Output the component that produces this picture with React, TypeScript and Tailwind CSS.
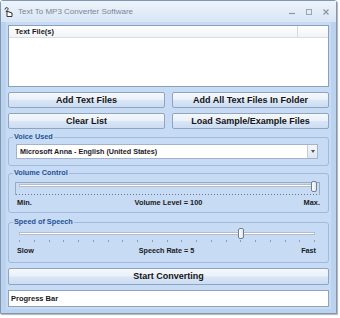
import React from "react";

function WinButton({ children, className = "" }: { children: React.ReactNode; className?: string }) {
  return (
    <button
      className={`flex items-center justify-center rounded-[2px] border border-[#8ea5c2] bg-[linear-gradient(to_bottom,#f5f8fc_0%,#eaf1fa_46%,#d8e5f5_54%,#ccddf2_100%)] text-[9px] font-bold leading-none text-[#141414] ${className}`}
    >
      {children}
    </button>
  );
}

function Group({ title, className = "", children }: { title: string; className?: string; children: React.ReactNode }) {
  return (
    <div className={`relative rounded-[3px] border border-[#9fbadc] ${className}`}>
      <span className="absolute -top-[6px] left-[4px] bg-[#c7dbf4] px-[1px] text-[7.3px] font-bold leading-[10px] text-[#1f5196]">
        {title}
      </span>
      {children}
    </div>
  );
}

function Thumb({ className = "" }: { className?: string }) {
  return (
    <div
      className={`absolute h-[11px] w-[6px] rounded-[2px] border border-[#6f8096] bg-[linear-gradient(to_right,#ffffff,#dfe6ee)] ${className}`}
    />
  );
}

export default function App() {
  const ticks = Array.from({ length: 21 }, (_, i) => i);

  return (
    <div className="h-[318px] w-[340px] overflow-hidden bg-white font-['Liberation_Sans',Arial,sans-serif]">
      <div className="flex h-[314px] w-[337px] flex-col rounded-t-[3px] border border-[#8196b1] bg-[#bcd3ef] shadow-[1px_1px_1px_rgba(0,0,0,0.3)]">
        {/* title bar */}
        <div className="flex h-[21px] items-center bg-[linear-gradient(to_bottom,#edf3fa,#d9e6f5)] pl-[2px] pr-[7px]">
          <svg width="11" height="12" viewBox="0 0 11 12" className="shrink-0">
            <path d="M2 3.5 C2 1.5 4.5 1 5 2.5 C5.5 4 3 4.5 3.2 6" fill="none" stroke="#222" strokeWidth="1" />
            <path d="M4 5.5 V10.5 H9 V7 H8 V6.5 H7 V6 H5.5 V5.5 Z" fill="#fff" stroke="#222" strokeWidth="0.9" />
          </svg>
          <span className="ml-[4px] text-[8px] leading-none text-[#7a8796]">Text To MP3 Converter Software</span>
          <div className="ml-auto flex items-center gap-[11px]">
            <svg width="6" height="6" viewBox="0 0 6 6">
              <path d="M0 4.5 H6" stroke="#8a96a6" strokeWidth="1.2" />
            </svg>
            <svg width="6" height="6" viewBox="0 0 6 6">
              <rect x="0.5" y="0.5" width="5" height="5" fill="none" stroke="#9aa5b4" strokeWidth="1" />
            </svg>
            <svg width="6" height="6" viewBox="0 0 6 6">
              <path d="M0.5 0.5 L5.5 5.5 M5.5 0.5 L0.5 5.5" stroke="#8a96a6" strokeWidth="1.2" />
            </svg>
          </div>
        </div>

        {/* client area */}
        <div className="mx-[5px] flex flex-1 flex-col bg-[#c7dbf4] px-[2px] pt-[3px]">
          {/* file list */}
          <div className="flex h-[62px] flex-col border border-[#8ba0bb] bg-white">
            <div className="flex h-[12px] border-b border-[#d9dee5] bg-[linear-gradient(to_bottom,#ffffff,#f1f3f6)]">
              <div className="flex w-[289px] items-center border-r border-[#d5dae1] pl-[6px] text-[7.5px] font-bold leading-none text-[#1a1a1a]">
                Text File(s)
              </div>
            </div>
          </div>

          <div className="mt-[5px] grid grid-cols-2 gap-x-[7px]">
            <WinButton className="h-[16px]">Add Text Files</WinButton>
            <WinButton className="h-[16px]">Add All Text Files In Folder</WinButton>
          </div>
          <div className="mt-[5px] grid grid-cols-2 gap-x-[7px]">
            <WinButton className="h-[16px]">Clear List</WinButton>
            <WinButton className="h-[16px]">Load Sample/Example Files</WinButton>
          </div>

          {/* voice */}
          <Group title="Voice Used" className="mt-[8px] pb-[6px] pl-[7px] pr-[10px] pt-[6px]">
            <div className="flex h-[15px] items-stretch border border-[#a4b3c6] bg-white">
              <span className="flex flex-1 items-center pl-[3px] text-[7.2px] font-bold leading-none text-[#1a1a1a]">
                Microsoft Anna - English (United States)
              </span>
              <span className="flex w-[10px] items-center justify-center border-l border-[#c3cedb] bg-[linear-gradient(to_bottom,#f6f8fb,#dde5ef)]">
                <svg width="4" height="3" viewBox="0 0 4 3">
                  <path d="M0 0 H4 L2 3 Z" fill="#4a5562" />
                </svg>
              </span>
            </div>
          </Group>

          {/* volume */}
          <Group title="Volume Control" className="mt-[7px] pb-[4px] pt-[8px]">
            <div className="relative ml-[6px] mr-[8px] h-[13px] border-x border-t border-[#9aa9bb]">
              <div className="mx-[3px] mt-[1px] h-[3px] border border-[#b3bcc8] bg-white" />
              <Thumb className="-top-[2px] right-[2px] h-[10px] w-[5px]" />
              <div className="absolute bottom-0 left-0 right-0 h-[1px] bg-[repeating-linear-gradient(90deg,#66778c_0_1px,transparent_1px_3px)]" />
            </div>
            <div className="mt-[3px] grid grid-cols-3 px-[8px] text-[7.4px] font-bold leading-[10px] text-[#1a1a1a]">
              <span>Min.</span>
              <span className="whitespace-nowrap text-center">Volume Level = 100</span>
              <span className="text-right">Max.</span>
            </div>
          </Group>

          {/* speed */}
          <Group title="Speed of Speech" className="mt-[9px] pb-[6px] pt-[5px]">
            <div className="relative ml-[10px] mr-[13px] h-[18px]">
              <div className="absolute left-0 right-0 top-[4px] h-[3px] border border-[#b3bcc8] bg-white" />
              <Thumb className="left-[75%] top-0 -translate-x-1/2" />
              <div className="absolute left-0 right-0 top-[12px] flex justify-between">
                {ticks.map((t) => (
                  <span key={t} className="h-[2px] w-[1px] bg-[#8d99a8]" />
                ))}
              </div>
            </div>
            <div className="grid grid-cols-3 pl-[8px] pr-[12px] text-[7.2px] font-bold leading-[10px] text-[#1a1a1a]">
              <span>Slow</span>
              <span className="whitespace-nowrap text-center">Speech Rate = 5</span>
              <span className="text-right">Fast</span>
            </div>
          </Group>

          <WinButton className="mt-[5px] h-[17px]">Start Converting</WinButton>

          <div className="mt-[5px] flex h-[17px] items-center border border-[#8fa3bb] bg-white pl-[2px] text-[7.5px] font-bold leading-none text-[#1a1a1a]">
            Progress Bar
          </div>
        </div>
        <div className="h-[4px]" />
      </div>
    </div>
  );
}
